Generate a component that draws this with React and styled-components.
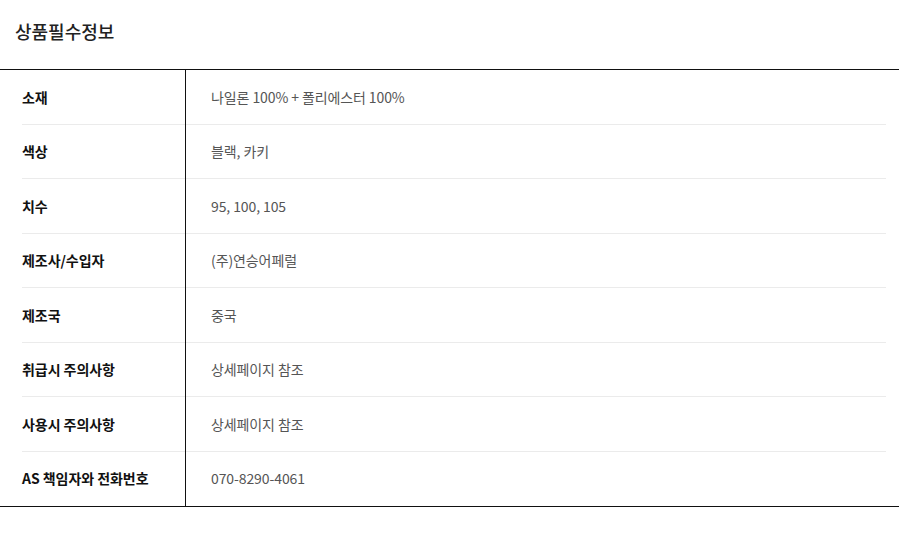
import React from "react";
import styled, { createGlobalStyle } from "styled-components";

const Global = createGlobalStyle`
  html, body { margin: 0; padding: 0; background: #fff; }
  body { font-family: "Noto Sans CJK KR", "Noto Sans", sans-serif; }
`;

const Page = styled.div`
  width: 899px;
  padding-top: 18px;
`;

const Title = styled.h2`
  margin: 0 0 0 15px;
  font-size: 18px;
  font-weight: 500;
  line-height: 26px;
  color: #222;
  letter-spacing: 0;
`;

const Table = styled.div`
  margin-top: 25px;
  border-top: 1px solid #111;
  border-bottom: 1px solid #111;
  display: flex;
  flex-direction: column;
`;

const Row = styled.div`
  display: flex;
  height: 54.5px;
`;

const LabelCell = styled.div`
  width: 186px;
  box-sizing: border-box;
  padding-left: 22px;
  border-right: 1px solid #111;
  display: flex;
`;

const ValueCell = styled.div`
  flex: 1;
  padding-right: 13px;
  display: flex;
`;

const Label = styled.div`
  flex: 1;
  display: flex;
  align-items: center;
  font-size: 14px;
  font-weight: 700;
  color: #111;
  letter-spacing: -0.05px;
  border-bottom: 1px solid ${(p) => (p.$last ? "transparent" : "#ebebeb")};
`;

const Value = styled.div`
  flex: 1;
  display: flex;
  align-items: center;
  padding-left: 25px;
  font-size: 14px;
  font-weight: 400;
  color: #555;
  letter-spacing: -0.1px;
  border-bottom: 1px solid ${(p) => (p.$last ? "transparent" : "#ebebeb")};
`;

const rows = [
  ["소재", "나일론 100% + 폴리에스터 100%"],
  ["색상", "블랙, 카키"],
  ["치수", "95, 100, 105"],
  ["제조사/수입자", "(주)연승어페럴"],
  ["제조국", "중국"],
  ["취급시 주의사항", "상세페이지 참조"],
  ["사용시 주의사항", "상세페이지 참조"],
  ["AS 책임자와 전화번호", "070-8290-4061"],
];

export default function App() {
  return (
    <>
      <Global />
      <Page>
        <Title>상품필수정보</Title>
        <Table>
          {rows.map(([k, v], i) => {
            const last = i === rows.length - 1;
            return (
              <Row key={k}>
                <LabelCell>
                  <Label $last={last}>{k}</Label>
                </LabelCell>
                <ValueCell>
                  <Value $last={last}>{v}</Value>
                </ValueCell>
              </Row>
            );
          })}
        </Table>
      </Page>
    </>
  );
}
